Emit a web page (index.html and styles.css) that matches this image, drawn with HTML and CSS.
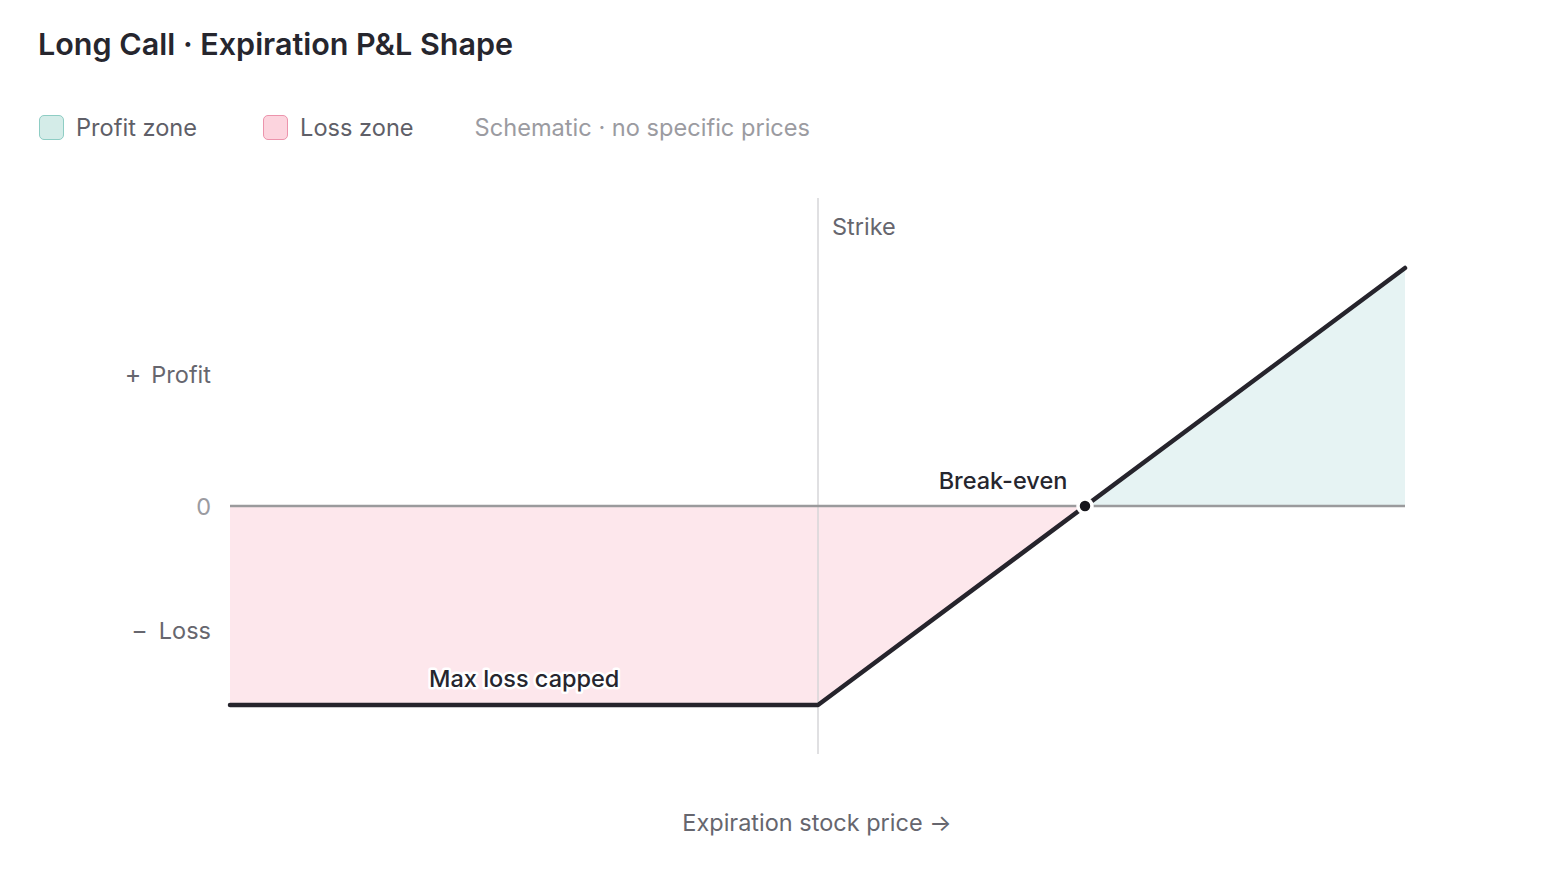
FILE: index.html
```html
<!DOCTYPE html>
<html lang="en">
<head>
<meta charset="utf-8">
<title>Long Call · Expiration P&amp;L Shape</title>
<link rel="stylesheet" href="styles.css">
</head>
<body>
<div class="page">
  <header class="head">
    <h1 class="title">Long Call · Expiration P&amp;L Shape</h1>
    <div class="legend">
      <div class="legend-item"><span class="swatch swatch-profit"></span><span class="legend-label">Profit zone</span></div>
      <div class="legend-item"><span class="swatch swatch-loss"></span><span class="legend-label">Loss zone</span></div>
      <div class="legend-note">Schematic · no specific prices</div>
    </div>
  </header>
  <svg class="chart" viewBox="0 170 1556 708" width="1556" height="708" xmlns="http://www.w3.org/2000/svg">
    <polygon class="fill-loss" points="230,506 1085,506 818,705 230,705"/>
    <polygon class="fill-profit" points="1085,506 1405,268 1405,506"/>
    <line class="strike-line" x1="818" y1="198" x2="818" y2="754"/>
    <line class="zero-line" x1="230" y1="506" x2="1405" y2="506"/>
    <polyline class="payoff" points="230,705 818,705 1405,268"/>
    <circle class="be-dot" cx="1085" cy="506" r="7"/>
    <text class="lbl-axis" x="211" y="383" text-anchor="end"><tspan class="sign">+</tspan><tspan dx="10">Profit</tspan></text>
    <text class="lbl-zero" x="211" y="515" text-anchor="end">0</text>
    <text class="lbl-axis" x="211" y="639" text-anchor="end"><tspan class="sign">−</tspan><tspan dx="11">Loss</tspan></text>
    <text class="lbl-axis" x="832" y="235">Strike</text>
    <text class="lbl-dark" x="1003" y="489" text-anchor="middle">Break-even</text>
    <text class="lbl-dark lbl-halo" x="429" y="687">Max loss capped</text>
    <text class="lbl-axis" x="817" y="831" text-anchor="middle">Expiration stock price →</text>
  </svg>
</div>
</body>
</html>
```
FILE: styles.css
```css
html, body {
  margin: 0;
  padding: 0;
  background: #ffffff;
}
body {
  font-family: Inter, "Noto Sans", "Liberation Sans", sans-serif;
  color: #26262e;
}
.page {
  width: 1556px;
  height: 878px;
  overflow: hidden;
}
.head {
  box-sizing: border-box;
  height: 170px;
  padding: 25px 0 0 38px;
}
.title {
  margin: 0;
  font-size: 30.5px;
  line-height: 38px;
  font-weight: 600;
  color: #26262e;
}
.legend {
  display: flex;
  align-items: center;
  margin-top: 50px;
  height: 28px;
}
.legend-item {
  display: flex;
  align-items: center;
  gap: 12px;
  margin-right: 65px;
}
.swatch {
  box-sizing: border-box;
  width: 25px;
  height: 25px;
  border-radius: 5px;
  margin-left: 1px;
}
.swatch-profit {
  background: #d4ece8;
  border: 1.5px solid #8ecdc4;
}
.swatch-loss {
  background: #fcd4de;
  border: 1.5px solid #ec94ac;
}
.legend-label {
  font-size: 23.6px;
  color: #5f5f68;
}
.legend-note {
  font-size: 23.6px;
  color: #9b9ba1;
  margin-left: -4px;
}
.chart {
  display: block;
}
.fill-loss {
  fill: #fde7ec;
}
.fill-profit {
  fill: #e6f3f3;
}
.strike-line {
  stroke: #d6d6d8;
  stroke-width: 1.5;
}
.zero-line {
  stroke: #9a9a9c;
  stroke-width: 2.5;
}
.payoff {
  fill: none;
  stroke: #26242c;
  stroke-width: 4.5;
  stroke-linecap: round;
  stroke-linejoin: round;
}
.be-dot {
  fill: #16161c;
  stroke: #ffffff;
  stroke-width: 3.5;
}
.chart text {
  font-family: Inter, "Noto Sans", "Liberation Sans", sans-serif;
  font-size: 23.5px;
}
.chart .sign {
  font-size: 25px;
}
.lbl-axis {
  fill: #66666e;
}
.lbl-zero {
  fill: #9b9ba1;
}
.lbl-dark {
  fill: #26262e;
  font-weight: 500;
}
.lbl-halo {
  paint-order: stroke;
  stroke: #ffffff;
  stroke-width: 5;
  stroke-linejoin: round;
}
```
